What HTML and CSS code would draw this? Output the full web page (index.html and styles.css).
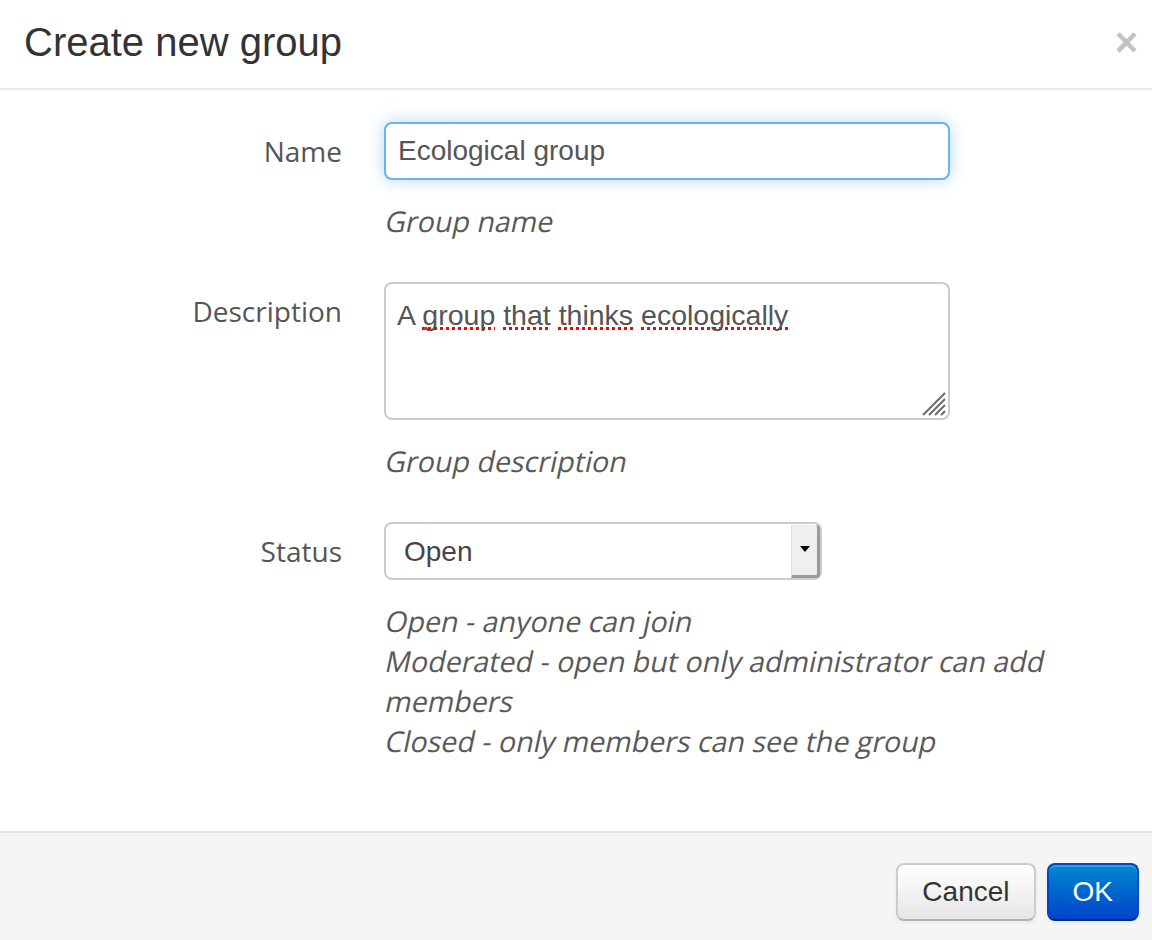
FILE: index.html
```html
<!DOCTYPE html>
<html lang="en">
<head>
    <meta charset="UTF-8">
    <title>Create new group</title>
    <link rel="stylesheet" href="styles.css">
</head>
<body>
    <div class="modal">
        <div class="modal-header">
            <h3>Create new group</h3>
            <button class="close" type="button">&times;</button>
        </div>

        <div class="modal-body">
            <form class="form-horizontal">
                <div class="control-group">
                    <label class="control-label">Name</label>
                    <div class="controls">
                        <input class="input-text focused" type="text" value="Ecological group">
                        <p class="help-block"><span>Group name</span></p>
                    </div>
                </div>

                <div class="control-group">
                    <label class="control-label">Description</label>
                    <div class="controls">
                        <div class="textarea">A <span class="typo">group</span> <span class="typo">that</span> <span class="typo">thinks</span> <span class="typo">ecologically</span>
                            <svg class="grip" width="28" height="28" viewBox="0 0 28 28">
                                <path d="M26 4 L4 26 M26 10 L10 26 M26 16 L16 26 M26 22 L22 26" stroke="#6a6a6a" stroke-width="2"/>
                            </svg>
                        </div>
                        <p class="help-block"><span>Group description</span></p>
                    </div>
                </div>

                <div class="control-group">
                    <label class="control-label">Status</label>
                    <div class="controls">
                        <div class="select-wrap">
                            <select class="status">
                                <option>Open</option>
                                <option>Moderated</option>
                                <option>Closed</option>
                            </select>
                            <span class="select-arrow"></span>
                        </div>
                        <p class="help-block">
                            <span>Open - anyone can join</span>
                            <span>Moderated - open but only administrator can add</span>
                            <span>members</span>
                            <span>Closed - only members can see the group</span>
                        </p>
                    </div>
                </div>
            </form>
        </div>

        <div class="modal-footer">
            <button class="btn" type="button">Cancel</button>
            <button class="btn btn-primary" type="button">OK</button>
        </div>
    </div>
</body>
</html>
```

FILE: styles.css
```css
* {
    margin: 0;
    padding: 0;
    box-sizing: border-box;
}

body {
    background: #fff;
    font-family: "Liberation Sans", Arial, sans-serif;
    color: #333;
}

.modal {
    width: 1152px;
    height: 940px;
    display: flex;
    flex-direction: column;
    background: #fff;
}

/* Cabeçalho */
.modal-header {
    display: flex;
    justify-content: space-between;
    align-items: flex-start;
    padding: 18px 14px 22px 24px;
    border-bottom: 2px solid #e9e9e9;
}

.modal-header h3 {
    font-size: 40px;
    line-height: 48px;
    font-weight: normal;
    color: #333;
}

.close {
    border: none;
    background: none;
    font-family: "Liberation Sans", Arial, sans-serif;
    font-size: 40px;
    font-weight: bold;
    line-height: 48px;
    color: #c2c2c2;
    cursor: pointer;
}

/* Corpo */
.modal-body {
    flex: 1;
    padding: 32px 22px 0 22px;
}

.control-group {
    display: grid;
    grid-template-columns: 320px 1fr;
    column-gap: 42px;
    margin-bottom: 41px;
}

.control-label {
    font-family: "Open Sans", sans-serif;
    font-size: 28px;
    line-height: 40px;
    padding-top: 9px;
    text-align: right;
    color: #555;
}

.input-text {
    display: block;
    width: 566px;
    height: 58px;
    padding: 0 12px;
    font-family: "Liberation Sans", Arial, sans-serif;
    font-size: 28px;
    color: #555;
    border: 2px solid #ccc;
    border-radius: 8px;
    outline: none;
}

.input-text.focused {
    border-color: #6cb3ec;
    box-shadow: 0 0 16px rgba(82, 168, 236, 0.45);
}

.textarea {
    position: relative;
    width: 566px;
    height: 138px;
    padding: 11px 11px;
    font-size: 28.5px;
    line-height: 40px;
    color: #555;
    border: 2px solid #ccc;
    border-radius: 8px;
}

.typo {
    text-decoration: underline dotted #f00;
    text-decoration-thickness: 3px;
    text-underline-offset: 2px;
    text-decoration-skip-ink: none;
}

.grip {
    position: absolute;
    right: 1px;
    bottom: 1px;
}

.select-wrap {
    position: relative;
    width: 438px;
}

.status {
    display: block;
    width: 100%;
    height: 58px;
    padding: 0 18px;
    font-family: "Liberation Sans", Arial, sans-serif;
    font-size: 28px;
    color: #444;
    background: #fff;
    border: 2px solid #ccc;
    border-radius: 8px;
    appearance: none;
    -webkit-appearance: none;
    outline: none;
}

.select-arrow {
    position: absolute;
    top: 3px;
    right: 2px;
    width: 29px;
    height: 53px;
    background: #efefef;
    border-left: 1px solid #dcdcdc;
    border-right: 3px solid #9a9a9a;
    border-bottom: 3px solid #9a9a9a;
    border-radius: 0 4px 4px 0;
}

.select-arrow::after {
    content: "";
    position: absolute;
    top: 21px;
    left: 8px;
    border-left: 5px solid transparent;
    border-right: 5px solid transparent;
    border-top: 6px solid #000;
}

/* texto de ajuda: regular inclinado, como no original */
.help-block {
    margin-top: 21px;
    font-family: "Open Sans", sans-serif;
    font-size: 28.6px;
    line-height: 40px;
    color: #595959;
}

.help-block span {
    display: block;
    width: max-content;
    transform: skewX(-12deg);
    transform-origin: 0 75%;
}

/* Rodapé */
.modal-footer {
    display: flex;
    justify-content: flex-end;
    gap: 11px;
    padding: 30px 13px 19px;
    background: #f5f5f5;
    border-top: 2px solid #e2e2e2;
}

.btn {
    height: 58px;
    padding: 0 24px;
    font-family: "Liberation Sans", Arial, sans-serif;
    font-size: 28px;
    color: #333;
    background: linear-gradient(#ffffff, #e6e6e6);
    border: 2px solid #ccc;
    border-bottom-color: #b3b3b3;
    border-radius: 8px;
    box-shadow: inset 0 2px 0 rgba(255, 255, 255, 0.2), 0 2px 4px rgba(0, 0, 0, 0.05);
    cursor: pointer;
}

.btn-primary {
    color: #fff;
    background: linear-gradient(#0088cc, #0044cc);
    border-color: #0044cc #0044cc #002a80;
}
```
